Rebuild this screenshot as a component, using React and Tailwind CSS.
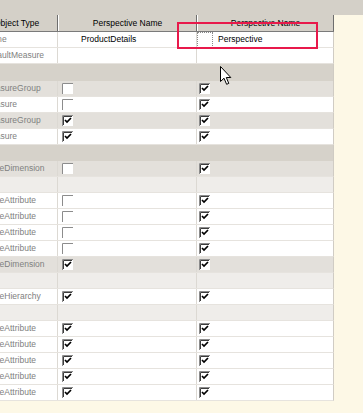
const rows = [
  { kind: "name" },
  { kind: "row", type: "DefaultMeasure", bg: "white" },
  { kind: "band", tall: true },
  { kind: "row", type: "MeasureGroup", bg: "gray", a: false, b: true },
  { kind: "row", type: "Measure", bg: "white", a: false, b: true },
  { kind: "row", type: "MeasureGroup", bg: "gray", a: true, b: true },
  { kind: "row", type: "Measure", bg: "white", a: true, b: true },
  { kind: "band" },
  { kind: "row", type: "CubeDimension", bg: "gray", a: false, b: true },
  { kind: "row", bg: "light" },
  { kind: "row", type: "CubeAttribute", bg: "white", a: false, b: true },
  { kind: "row", type: "CubeAttribute", bg: "white", a: false, b: true },
  { kind: "row", type: "CubeAttribute", bg: "white", a: false, b: true },
  { kind: "row", type: "CubeAttribute", bg: "white", a: false, b: true },
  { kind: "row", type: "CubeDimension", bg: "gray", a: true, b: true },
  { kind: "row", bg: "light" },
  { kind: "row", type: "CubeHierarchy", bg: "white", a: true, b: true },
  { kind: "row", bg: "light" },
  { kind: "row", type: "CubeAttribute", bg: "white", a: true, b: true },
  { kind: "row", type: "CubeAttribute", bg: "white", a: true, b: true },
  { kind: "row", type: "CubeAttribute", bg: "white", a: true, b: true },
  { kind: "row", type: "CubeAttribute", bg: "white", a: true, b: true },
  { kind: "row", type: "CubeAttribute", bg: "white", a: true, b: true }
];

const bgs = {
  white: "bg-white",
  gray: "bg-[#e3e0db]",
  light: "bg-[#efedea]"
};

function CheckBox({ checked }) {
  return (
    <svg width="11" height="11" viewBox="0 0 11 11" className="block">
      <rect x="0" y="0" width="11" height="11" fill="#fff" />
      {checked ? (
        <>
          <path d="M0.5 11V0.5H11" stroke="#8c8c8c" fill="none" />
          <path d="M1.5 10V1.5H10" stroke="#3c3c3c" fill="none" />
          <path d="M3 5l2 2 4-4" stroke="#000" strokeWidth="1.7" fill="none" />
        </>
      ) : (
        <path d="M0.5 11V0.5H11" stroke="#8c8c8c" fill="none" />
      )}
    </svg>
  );
}

function TypeCell({ text }) {
  return (
    <div className="w-[58px] h-full border-r border-[#dcd9d3] overflow-hidden flex items-center">
      {text && (
        <span className="ml-[-16px] whitespace-nowrap text-[#808080]">{text}</span>
      )}
    </div>
  );
}

function Row({ row }) {
  if (row.kind === "band") {
    return (
      <div
        className={`${row.tall ? "h-[17px]" : "h-[16px]"} w-[334px] bg-[#d6d2ca] border-r border-[#cfcbc3]`}
      />
    );
  }
  if (row.kind === "name") {
    return (
      <div className="flex h-[16px] w-[334px] bg-white border-b border-[#e6e3de] border-r border-r-[#d0ccc4]">
        <TypeCell text="Name" />
        <div className="w-[139px] h-full border-r border-[#dcd9d3] flex items-center pl-[23px]">
          ProductDetails
        </div>
        <div className="w-[136px] h-full flex items-center">
          <div className="w-[16px] h-[16px] border border-dotted border-[#8a8a8a]" />
          <span className="ml-[5px]">Perspective</span>
        </div>
      </div>
    );
  }
  return (
    <div className={`flex h-[16px] w-[334px] border-b border-[#e6e3de] border-r border-r-[#d0ccc4] ${bgs[row.bg]}`}>
      <TypeCell text={row.type} />
      <div className="w-[139px] h-full border-r border-[#dcd9d3] flex items-center pl-[4px]">
        {row.a !== undefined && <CheckBox checked={row.a} />}
      </div>
      <div className="w-[136px] h-full flex items-center pl-[2px]">
        {row.b !== undefined && <CheckBox checked={row.b} />}
      </div>
    </div>
  );
}

export default function App() {
  return (
    <div className="relative w-[363px] h-[413px] overflow-hidden bg-[#fdf8e6] text-[8.5px] text-black font-['Liberation_Sans',Arial,sans-serif]">
      <div className="h-[15px] bg-[#d4d0c8]" />
      <div className="flex h-[17px] w-[334px] bg-[#d4d0c8] border-b border-[#7a7a7a]">
        <div className="w-[58px] h-full border-r border-[#6e6e6e] overflow-hidden flex items-center">
          <span className="ml-[-6px] whitespace-nowrap">Object Type</span>
        </div>
        <div className="w-[139px] h-full border-l border-white border-r border-r-[#6e6e6e] flex items-center justify-center">
          Perspective Name
        </div>
        <div className="w-[137px] h-full border-l border-white border-r border-r-[#6e6e6e] flex items-center justify-center">
          Perspective Name
        </div>
      </div>
      {rows.map((row, i) => (
        <Row key={i} row={row} />
      ))}

      <div className="absolute left-[177px] top-[22px] w-[141px] h-[27px] border-2 border-[#e8194b]" />

      <svg
        className="absolute left-[220px] top-[66px]"
        width="12"
        height="20"
        viewBox="0 0 12 20"
      >
        <path
          d="M0.5 0.5V15.5L4 12.2L6.6 18.3L8.8 17.4L6.3 11.5H10.8Z"
          fill="#fff"
          stroke="#000"
          strokeWidth="1"
          strokeLinejoin="miter"
        />
      </svg>
    </div>
  );
}
